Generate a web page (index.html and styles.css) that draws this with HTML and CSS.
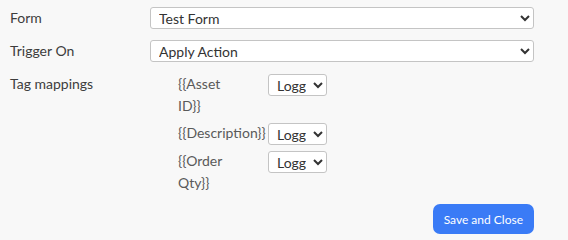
FILE: index.html
```html
<!DOCTYPE html>
<html lang="en">
<head>
    <meta charset="utf-8" />
    <title>Trigger Settings</title>
    <link rel="stylesheet" href="styles.css">
</head>
<body>
    <main class="settings">
        <form class="settings-form">
            <label class="field-label" for="formSelect">Form</label>
            <select id="formSelect" class="field-select">
                <option>Test Form</option>
            </select>

            <label class="field-label" for="triggerSelect">Trigger On</label>
            <select id="triggerSelect" class="field-select">
                <option>Apply Action</option>
            </select>

            <span class="field-label">Tag mappings</span>
            <div class="mappings">
                <span class="tag">{{Asset ID}}</span>
                <select class="tag-select">
                    <option>Logged In User</option>
                </select>

                <span class="tag">{{Description}}</span>
                <select class="tag-select">
                    <option>Logged In User</option>
                </select>

                <span class="tag">{{Order Qty}}</span>
                <select class="tag-select">
                    <option>Logged In User</option>
                </select>
            </div>
        </form>

        <div class="actions">
            <button type="button" class="btn-primary">Save and Close</button>
        </div>
    </main>
</body>
</html>
```

FILE: styles.css
```css
* {
    font-family: Lato, "Open Sans", sans-serif;
    box-sizing: border-box;
}

html, body {
    margin: 0;
    background: #f8f8f8;
}

.settings {
    width: 568px;
    padding: 7px 34px 0 10px;
}

.settings-form {
    display: grid;
    grid-template-columns: 140px 1fr;
    row-gap: 11px;
    align-items: start;
}

.field-label {
    font-size: 14px;
    line-height: 22px;
    color: #3d3d3d;
}

.field-select {
    height: 22px;
    padding: 0 4px;
    font-size: 14px;
    color: #333;
    background: #fff;
    border: 1px solid #c4c4c4;
    border-radius: 3px;
}

.mappings {
    display: grid;
    grid-template-columns: 60px 59px;
    column-gap: 30px;
    row-gap: 5px;
    margin-left: 28px;
    align-items: start;
}

.tag {
    font-size: 14px;
    line-height: 22px;
    color: #5a5a5a;
}

.tag-select {
    width: 59px;
    height: 22px;
    margin-top: 1px;
    padding: 0 4px;
    font-size: 14px;
    color: #333;
    background: #fff;
    border: 1px solid #c4c4c4;
    border-radius: 3px;
}

.actions {
    display: flex;
    justify-content: flex-end;
    margin-top: 10px;
}

.btn-primary {
    height: 30px;
    padding: 0 11px;
    font-size: 12px;
    color: #fff;
    background: #3a7bf6;
    border: none;
    border-radius: 7px;
}
```
